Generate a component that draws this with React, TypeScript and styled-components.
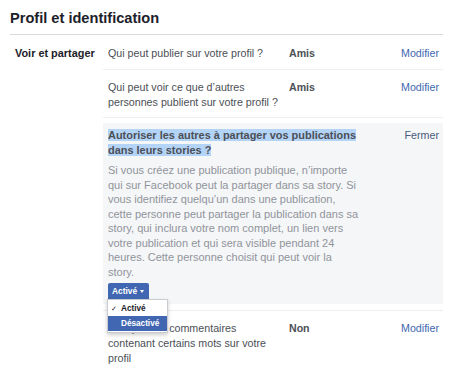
import React from "react";
import styled, { createGlobalStyle } from "styled-components";

const Global = createGlobalStyle`
  html, body { margin: 0; padding: 0; background: #fff; }
  body { font-family: "Liberation Sans", Arial, sans-serif; -webkit-font-smoothing: antialiased; }
`;

const Page = styled.div`
  width: 450px;
  height: 371px;
  overflow: hidden;
  padding: 8px 7px 0 10px;
  box-sizing: border-box;
`;

const Title = styled.h2`
  margin: 0;
  font-size: 14.6px;
  line-height: 20px;
  font-weight: bold;
  color: #1d2129;
  padding-bottom: 6px;
  border-bottom: 1px solid #d6d9dd;
`;

const Section = styled.div`
  display: grid;
  grid-template-columns: 93px 1fr;
`;

const Label = styled.div`
  padding: 11px 0 0 5px;
  font-size: 10.9px;
  line-height: 15px;
  font-weight: bold;
  color: #1d2129;
`;

const Rows = styled.div`
  display: flex;
  flex-direction: column;
`;

const Row = styled.div<{ $pb?: number; $pt?: number }>`
  display: grid;
  grid-template-columns: 181px 1fr auto;
  padding: ${(p) => p.$pt ?? 11}px 4px ${(p) => p.$pb ?? 8}px 5px;
  border-bottom: 1px solid #eceef1;
  font-size: 10.7px;
  line-height: 15px;
`;

const Question = styled.div`
  color: #4b4f56;
  padding-right: 4px;
`;

const Value = styled.div`
  color: #4b4f56;
  font-weight: bold;
  font-size: 10.6px;
`;

const Link = styled.span<{ $dark?: boolean }>`
  color: ${(p) => (p.$dark ? "#4b5b7e" : "#4267b2")};
  cursor: pointer;
`;

const Expanded = styled.div`
  padding: 5px 0 6px;
  border-bottom: 1px solid #eceef1;
`;

const Panel = styled.div`
  background: #f5f6f7;
  padding: 5px 4px 5px 5px;
  display: grid;
  grid-template-columns: 252px 1fr auto;
  font-size: 10.7px;
  line-height: 14.5px;
`;

const PanelMain = styled.div`
  display: flex;
  flex-direction: column;
`;

const PanelTitle = styled.div`
  font-weight: bold;
  color: #4b4f56;
  font-size: 10.95px;
  line-height: 15px;
  margin-bottom: 5px;
  span { background: #b3d3f7; }
`;

const Body = styled.div`
  color: #90949c;
  font-size: 11px;
`;

const DropWrap = styled.div`
  position: relative;
  align-self: flex-start;
  margin-top: 4px;
`;

const DropButton = styled.div`
  background: #4267b2;
  color: #fff;
  font-size: 8.4px;
  font-weight: bold;
  line-height: 16px;
  height: 16px;
  padding: 0 5px 0 4px;
  display: inline-flex;
  align-items: center;
  gap: 3px;
  border-radius: 2px 2px 0 0;
`;

const Caret = styled.span`
  width: 0;
  height: 0;
  border-left: 2.5px solid transparent;
  border-right: 2.5px solid transparent;
  border-top: 3px solid #fff;
  margin-top: 1px;
`;

const Menu = styled.div`
  position: absolute;
  top: 16px;
  left: -1px;
  width: 59px;
  padding: 1px 0;
  background: #fff;
  border: 1px solid #c9ccd1;
  box-shadow: 0 2px 4px rgba(0, 0, 0, 0.2);
  z-index: 2;
`;

const MenuItem = styled.div<{ $active?: boolean; $checked?: boolean }>`
  position: relative;
  height: 15px;
  line-height: 15px;
  padding-left: 13px;
  font-size: 8.2px;
  font-weight: bold;
  color: ${(p) => (p.$active ? "#fff" : "#1d2129")};
  background: ${(p) => (p.$active ? "#4267b2" : "transparent")};
  &::before {
    content: ${(p) => (p.$checked ? '"\\2713"' : '""')};
    position: absolute;
    left: 3px;
    font-size: 7px;
    font-weight: normal;
  }
`;

export default function App() {
  return (
    <Page>
      <Global />
      <Title>Profil et identification</Title>
      <Section>
        <Label>Voir et partager</Label>
        <Rows>
          <Row>
            <Question>Qui peut publier sur votre profil ?</Question>
            <Value>Amis</Value>
            <Link>Modifier</Link>
          </Row>
          <Row $pt={10} $pb={7}>
            <Question>Qui peut voir ce que d’autres personnes publient sur votre profil ?</Question>
            <Value>Amis</Value>
            <Link>Modifier</Link>
          </Row>
          <Expanded>
            <Panel>
              <PanelMain>
                <PanelTitle>
                  <span>Autoriser les autres à partager vos publications dans leurs stories ?</span>
                </PanelTitle>
                <Body>
                  Si vous créez une publication publique, n’importe qui sur Facebook peut la partager dans sa story. Si vous identifiez quelqu’un dans une publication, cette personne peut partager la publication dans sa story, qui inclura votre nom complet, un lien vers votre publication et qui sera visible pendant 24 heures. Cette personne choisit qui peut voir la story.
                </Body>
                <DropWrap>
                  <DropButton>
                    Activé <Caret />
                  </DropButton>
                  <Menu>
                    <MenuItem $checked>Activé</MenuItem>
                    <MenuItem $active>Désactivé</MenuItem>
                  </Menu>
                </DropWrap>
              </PanelMain>
              <div />
              <Link $dark>Fermer</Link>
            </Panel>
          </Expanded>
          <Row $pt={10}>
            <Question>Masquer les commentaires contenant certains mots sur votre profil</Question>
            <Value>Non</Value>
            <Link>Modifier</Link>
          </Row>
        </Rows>
      </Section>
    </Page>
  );
}
